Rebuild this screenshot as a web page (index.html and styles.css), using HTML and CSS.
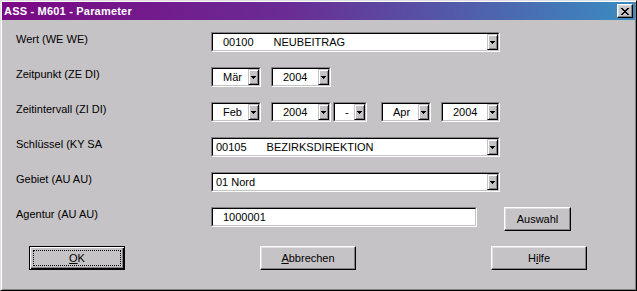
FILE: index.html
```html
<!DOCTYPE html>
<html lang="de">
<head>
    <meta charset="UTF-8">
    <title>ASS - M601 - Parameter</title>
    <link rel="stylesheet" href="styles.css">
</head>
<body>

    <div class="window">
        <!-- Titelleiste -->
        <div class="titlebar">
            <span class="title">ASS - M601 - Parameter</span>
            <button class="close-btn">
                <svg width="8" height="7" viewBox="0 0 8 7" shape-rendering="crispEdges"><path d="M0 0h2v1H0zM6 0h2v1H6zM1 1h2v1H1zM5 1h2v1H5zM2 2h4v1H2zM3 3h2v1H3zM2 4h4v1H2zM1 5h2v1H1zM5 5h2v1H5zM0 6h2v1H0zM6 6h2v1H6z"/></svg>
            </button>
        </div>

        <div class="content">
            <div class="form">
                <div class="label">Wert (WE WE)</div>
                <div class="controls">
                    <div class="combo wide">
                        <div class="box">
                            <span class="value"><span class="code">00100</span>NEUBEITRAG</span>
                            <span class="arrow"><svg width="5" height="3" viewBox="0 0 5 3" shape-rendering="crispEdges"><path d="M0 0h5v1H0zM1 1h3v1H1zM2 2h1v1H2z"/></svg></span>
                        </div>
                    </div>
                </div>

                <div class="label">Zeitpunkt (ZE DI)</div>
                <div class="controls">
                    <div class="combo month">
                        <div class="box">
                            <span class="value">Mär</span>
                            <span class="arrow"><svg width="5" height="3" viewBox="0 0 5 3" shape-rendering="crispEdges"><path d="M0 0h5v1H0zM1 1h3v1H1zM2 2h1v1H2z"/></svg></span>
                        </div>
                    </div>
                    <div class="combo year">
                        <div class="box">
                            <span class="value">2004</span>
                            <span class="arrow"><svg width="5" height="3" viewBox="0 0 5 3" shape-rendering="crispEdges"><path d="M0 0h5v1H0zM1 1h3v1H1zM2 2h1v1H2z"/></svg></span>
                        </div>
                    </div>
                </div>

                <div class="label">Zeitintervall (ZI DI)</div>
                <div class="controls">
                    <div class="combo month">
                        <div class="box">
                            <span class="value">Feb</span>
                            <span class="arrow"><svg width="5" height="3" viewBox="0 0 5 3" shape-rendering="crispEdges"><path d="M0 0h5v1H0zM1 1h3v1H1zM2 2h1v1H2z"/></svg></span>
                        </div>
                    </div>
                    <div class="combo year">
                        <div class="box">
                            <span class="value">2004</span>
                            <span class="arrow"><svg width="5" height="3" viewBox="0 0 5 3" shape-rendering="crispEdges"><path d="M0 0h5v1H0zM1 1h3v1H1zM2 2h1v1H2z"/></svg></span>
                        </div>
                    </div>
                    <div class="combo dash">
                        <div class="box">
                            <span class="value">-</span>
                            <span class="arrow"><svg width="5" height="3" viewBox="0 0 5 3" shape-rendering="crispEdges"><path d="M0 0h5v1H0zM1 1h3v1H1zM2 2h1v1H2z"/></svg></span>
                        </div>
                    </div>
                    <div class="combo month to">
                        <div class="box">
                            <span class="value">Apr</span>
                            <span class="arrow"><svg width="5" height="3" viewBox="0 0 5 3" shape-rendering="crispEdges"><path d="M0 0h5v1H0zM1 1h3v1H1zM2 2h1v1H2z"/></svg></span>
                        </div>
                    </div>
                    <div class="combo year last">
                        <div class="box">
                            <span class="value">2004</span>
                            <span class="arrow"><svg width="5" height="3" viewBox="0 0 5 3" shape-rendering="crispEdges"><path d="M0 0h5v1H0zM1 1h3v1H1zM2 2h1v1H2z"/></svg></span>
                        </div>
                    </div>
                </div>

                <div class="label">Schlüssel (KY SA</div>
                <div class="controls">
                    <div class="combo wide">
                        <div class="box">
                            <span class="value tight"><span class="code">00105</span>BEZIRKSDIREKTION</span>
                            <span class="arrow"><svg width="5" height="3" viewBox="0 0 5 3" shape-rendering="crispEdges"><path d="M0 0h5v1H0zM1 1h3v1H1zM2 2h1v1H2z"/></svg></span>
                        </div>
                    </div>
                </div>

                <div class="label">Gebiet (AU AU)</div>
                <div class="controls">
                    <div class="combo wide">
                        <div class="box">
                            <span class="value tight">01 Nord</span>
                            <span class="arrow"><svg width="5" height="3" viewBox="0 0 5 3" shape-rendering="crispEdges"><path d="M0 0h5v1H0zM1 1h3v1H1zM2 2h1v1H2z"/></svg></span>
                        </div>
                    </div>
                </div>

                <div class="label">Agentur (AU AU)</div>
                <div class="controls">
                    <div class="combo field">
                        <div class="box">
                            <span class="value">1000001</span>
                        </div>
                    </div>
                    <button class="btn btn-small">Auswahl</button>
                </div>
            </div>

            <!-- Buttons unten -->
            <div class="actions">
                <button class="btn btn-default"><span class="focus"><u>O</u>K</span></button>
                <button class="btn"><u>A</u>bbrechen</button>
                <button class="btn">H<u>i</u>lfe</button>
            </div>
        </div>
    </div>

</body>
</html>
```

FILE: styles.css
```css
body {
    margin: 0;
    padding: 0;
    font-family: "Liberation Sans", Arial, sans-serif;
    font-size: 11px;
    color: #000;
}

/* Fenster */
.window {
    width: 637px;
    height: 291px;
    box-sizing: border-box;
    background-color: #c6c3c6;
    border: 1px solid;
    border-color: #dedfde #000 #000 #dedfde;
    box-shadow: inset 1px 1px #fff, inset -1px -1px #848284;
    padding: 1px;
}

.titlebar {
    height: 18px;
    display: flex;
    justify-content: space-between;
    align-items: center;
    padding: 0 2px 0 2px;
    background: linear-gradient(to right, #7b0884, #6a2c94 45%, #3a8cc0);
}

.title {
    color: #fff;
    font-weight: bold;
    font-size: 11px;
    letter-spacing: 0.2px;
}

.close-btn {
    width: 16px;
    height: 14px;
    padding: 0;
    display: flex;
    align-items: center;
    justify-content: center;
    background-color: #c6c3c6;
    border: 1px solid;
    border-color: #fff #000 #000 #fff;
    box-shadow: inset -1px -1px #848284, inset 1px 1px #dedfde;
}

/* Formular */
.content {
    padding: 12px 0 0 14px;
}

.form {
    display: grid;
    grid-template-columns: 195px 1fr;
    row-gap: 15px;
}

.label {
    line-height: 14px;
}

.controls {
    display: flex;
    align-items: flex-start;
}

.combo {
    height: 20px;
    box-sizing: border-box;
    border: 1px solid;
    border-color: #848284 #fff #fff #848284;
}

.combo .box {
    height: 16px;
    display: flex;
    border: 1px solid;
    border-color: #000 #c6c3c6 #c6c3c6 #000;
    background-color: #fff;
}

.combo .value {
    flex: 1;
    line-height: 17px;
    padding-left: 10px;
    white-space: nowrap;
}

.combo .value.tight {
    padding-left: 3px;
}

.code {
    margin-right: 20px;
}

.arrow {
    width: 11px;
    box-sizing: border-box;
    display: flex;
    align-items: center;
    justify-content: center;
    background-color: #c6c3c6;
    border: 1px solid;
    border-color: #c6c3c6 #000 #000 #c6c3c6;
    box-shadow: inset 1px 1px #fff, inset -1px -1px #848284;
}

.wide { width: 289px; }
.month { width: 50px; margin-right: 10px; }
.year { width: 60px; margin-right: 2px; }
.dash { width: 34px; margin-right: 14px; }
.year.last { width: 59px; margin-right: 0; }
.field { width: 266px; }

/* Buttons */
.btn {
    width: 96px;
    height: 24px;
    padding: 0;
    box-sizing: border-box;
    font-family: inherit;
    font-size: 11px;
    color: #000;
    background-color: #c6c3c6;
    border: 1px solid;
    border-color: #fff #000 #000 #fff;
    box-shadow: inset -1px -1px #848284, inset 1px 1px #dedfde;
}

.btn-small {
    width: 67px;
    margin-left: 27px;
}

.btn-default {
    border-color: #000;
    box-shadow: inset 1px 1px #fff, inset -1px -1px #000, inset -2px -2px #848284;
    padding: 3px;
    display: flex;
}

.btn-default .focus {
    flex: 1;
    display: flex;
    align-items: center;
    justify-content: center;
    border: 1px dotted #000;
}

.actions {
    display: flex;
    gap: 135px;
    margin-top: 15px;
    padding-left: 13px;
}
```
